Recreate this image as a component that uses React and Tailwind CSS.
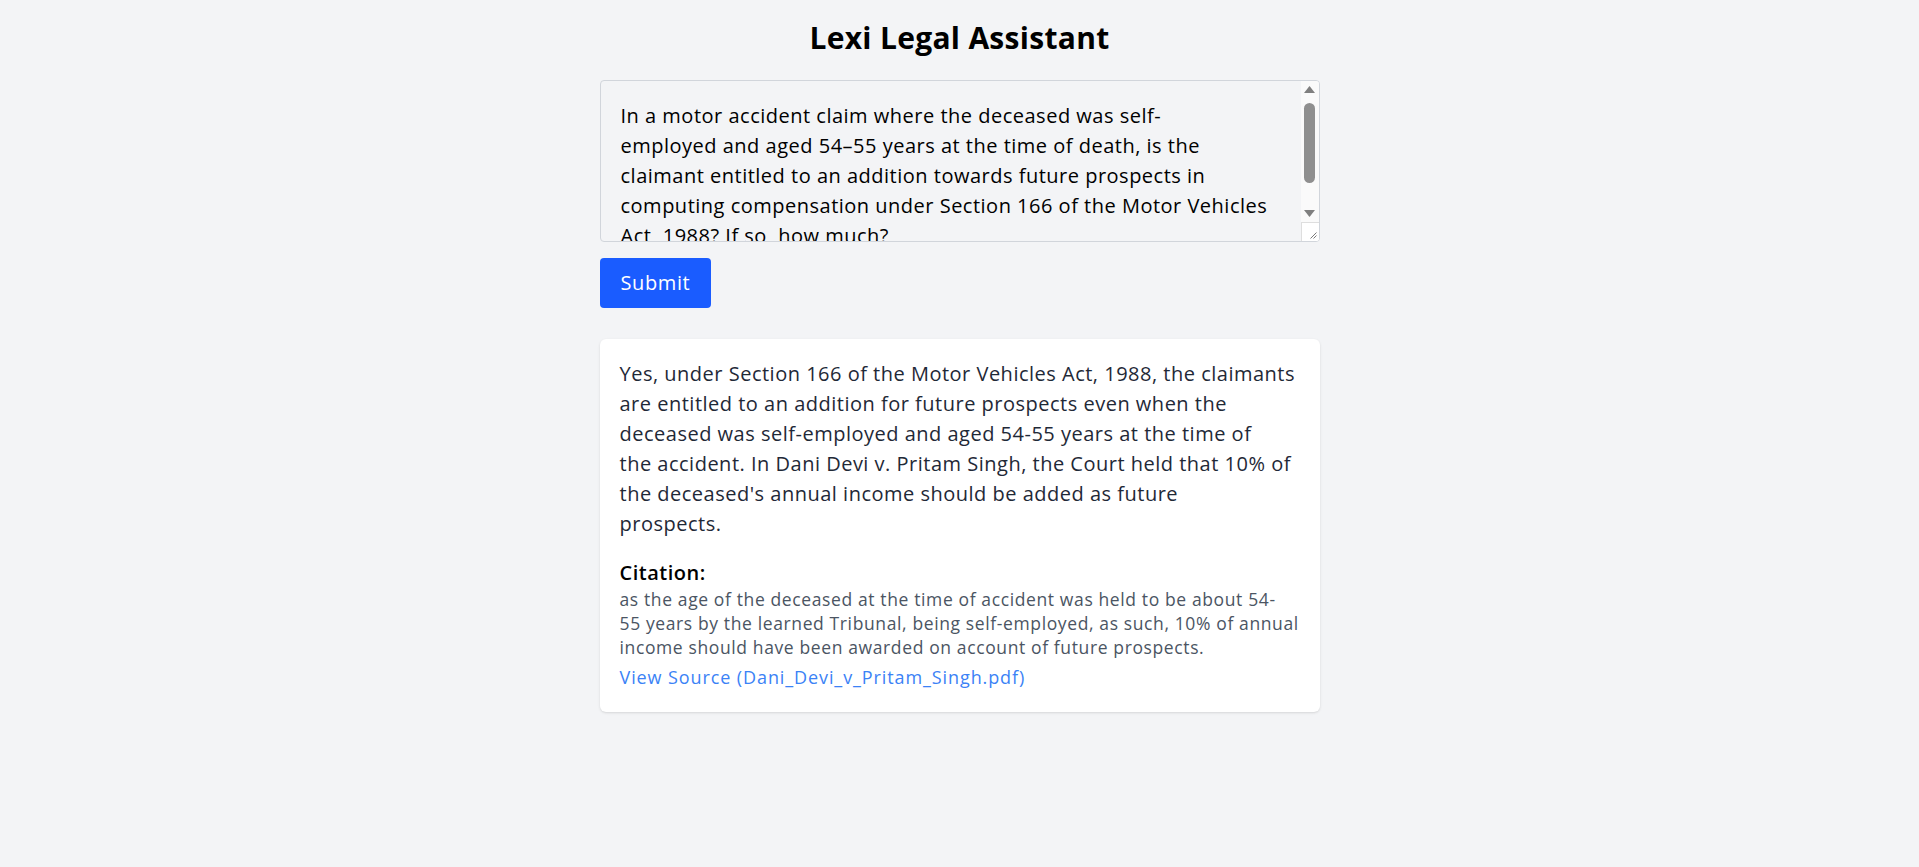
import { useState } from 'react';

const QUESTION = [
  'In a motor accident claim where the deceased was self-',
  'employed and aged 54–55 years at the time of death, is the',
  'claimant entitled to an addition towards future prospects in',
  'computing compensation under Section 166 of the Motor Vehicles',
  'Act, 1988? If so, how much?',
].join('\n');

const ANSWER = [
  'Yes, under Section 166 of the Motor Vehicles Act, 1988, the claimants',
  'are entitled to an addition for future prospects even when the',
  'deceased was self-employed and aged 54-55 years at the time of',
  'the accident. In Dani Devi v. Pritam Singh, the Court held that 10% of',
  "the deceased's annual income should be added as future",
  'prospects.',
];

const CITATION = [
  'as the age of the deceased at the time of accident was held to be about 54-',
  '55 years by the learned Tribunal, being self-employed, as such, 10% of annual',
  'income should have been awarded on account of future prospects.',
];

function Lines({ lines }) {
  return lines.map((line, i) => (
    <span key={i}>
      {line}
      {i < lines.length - 1 && <br />}
    </span>
  ));
}

// classic scrollbar next to the question box
function Scrollbar() {
  return (
    <div className="w-[18px] flex flex-col bg-[#fafafa]">
      <div className="h-[17px] flex items-center justify-center">
        <svg width="11" height="7" viewBox="0 0 11 7">
          <path d="M5.5 0 L11 7 L0 7 Z" fill="#7f7f7f" />
        </svg>
      </div>
      <div className="flex-1 flex justify-center pt-[5px]">
        <div className="w-[11px] h-[80px] rounded-full bg-[#8f8f8f]" />
      </div>
      <div className="h-[17px] flex items-center justify-center">
        <svg width="11" height="7" viewBox="0 0 11 7">
          <path d="M0 0 L11 0 L5.5 7 Z" fill="#7f7f7f" />
        </svg>
      </div>
      <div className="h-[19px] border-t border-l border-[#dedede] bg-white flex items-end justify-end p-[2px]">
        <svg width="8" height="8" viewBox="0 0 8 8">
          <path d="M7.5 1.5 L1.5 7.5 M7.5 4.5 L4.5 7.5" stroke="#7a7a7a" strokeWidth="1" />
        </svg>
      </div>
    </div>
  );
}

export default function App() {
  const [query, setQuery] = useState(QUESTION);

  return (
    <div className="min-h-screen w-full bg-[#f3f4f6] font-['Open_Sans',sans-serif]">
      <div className="max-w-[720px] mx-auto pt-5 pb-10">
        {/* Header */}
        <h1 className="text-center text-[30px] leading-[36px] font-bold text-black tracking-[0.3px]">
          Lexi Legal Assistant
        </h1>

        {/* Question box */}
        <div className="mt-6 flex h-[162px] border border-[#d1d5db] rounded overflow-hidden">
          <textarea
            rows={4}
            value={query}
            onChange={(e) => setQuery(e.target.value)}
            className="flex-1 min-w-0 resize-none overflow-hidden p-5 pr-0 text-[20px] leading-[30px] tracking-[0.5px] text-black outline-none"
          />
          <Scrollbar />
        </div>

        <button className="mt-4 h-[50px] px-[21px] rounded bg-[#1a5cff] text-white text-[20px] leading-7 tracking-[0.6px]">
          Submit
        </button>

        {/* Answer card */}
        <div className="mt-[31px] bg-white rounded-md shadow-sm px-5 pt-5 pb-[23px]">
          <p className="whitespace-nowrap text-[20px] leading-[30px] tracking-[0.5px] text-[#1f2937]">
            <Lines lines={ANSWER} />
          </p>

          <div className="mt-5">
            <h2 className="text-[20px] leading-7 font-semibold text-black tracking-[0.5px]">Citation:</h2>
            <p className="whitespace-nowrap text-[17.5px] leading-6 tracking-[0.62px] text-[#4b5563]">
              <Lines lines={CITATION} />
            </p>
            <a
              href="#"
              className="block mt-1.5 text-[18px] leading-6 tracking-[0.9px] text-[#3b82f6]"
            >
              View Source (Dani_Devi_v_Pritam_Singh.pdf)
            </a>
          </div>
        </div>
      </div>
    </div>
  );
}
